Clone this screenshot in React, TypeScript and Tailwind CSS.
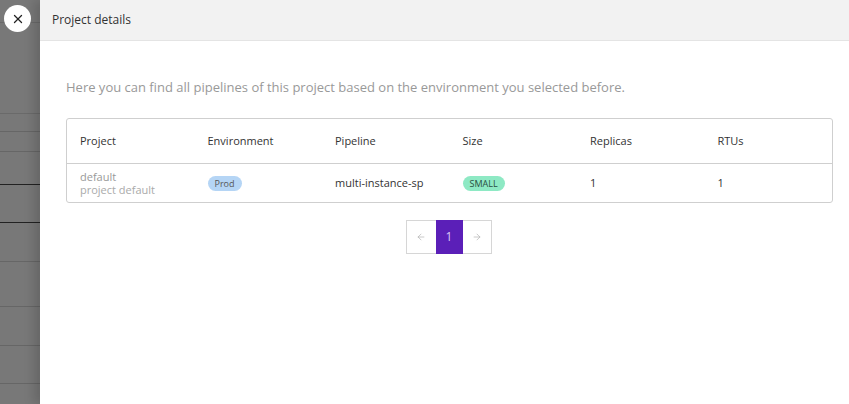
import { ArrowLeft, ArrowRight, X } from "lucide-react";

const backdropRows = [
  { h: "h-[23px]", line: "border-[#6a6a6a]" },
  { h: "h-[91px]", line: "border-[#6a6a6a]" },
  { h: "h-[18px]", line: "border-[#666]" },
  { h: "h-[20px]", line: "border-[#666]" },
  { h: "h-[33px]", line: "border-[#222]" },
  { h: "h-[38px]", line: "border-[#222]" },
  { h: "h-[39px]", line: "border-[#666]" },
  { h: "h-[45px]", line: "border-[#666]" },
  { h: "h-[39px]", line: "border-[#666]" },
  { h: "h-[38px]", line: "border-[#666]" },
];

const columns = ["Project", "Environment", "Pipeline", "Size", "Replicas", "RTUs"];

export default function App() {
  return (
    <div
      className="relative flex h-[404px] w-[849px] overflow-hidden bg-white text-[#333]"
      style={{ fontFamily: '"Open Sans", "Noto Sans", sans-serif' }}
    >
      {/* dimmed page behind the drawer */}
      <div className="flex w-[40px] shrink-0 flex-col bg-[#787878]">
        {backdropRows.map((row, i) => (
          <div key={i} className={`${row.h} shrink-0 border-b ${row.line}`} />
        ))}
      </div>

      <button className="absolute left-[4px] top-[5px] z-10 flex h-[27px] w-[27px] items-center justify-center rounded-full bg-white text-[#222]">
        <X size={14} strokeWidth={2.2} />
      </button>

      <div className="flex flex-1 flex-col shadow-[-6px_0_10px_rgba(0,0,0,0.15)]">
        <div className="flex h-[41px] shrink-0 items-center border-b border-[#e4e4e4] bg-[#f2f2f2] pl-[12px] text-[12px] text-[#333]">
          Project details
        </div>

        <div className="pl-[26px] pr-[16px]">
          <p className="mt-[37px] text-[13px] leading-[18px] text-[#999]">
            Here you can find all pipelines of this project based on the environment you selected before.
          </p>

          <div className="mt-[22px] rounded-[3px] border border-[#cfcfcf]">
            <div className="grid h-[45px] grid-cols-6 items-center border-b border-[#cfcfcf] text-[11px] text-[#333]">
              {columns.map((c) => (
                <div key={c} className="pl-[13px]">
                  {c}
                </div>
              ))}
            </div>
            <div className="grid h-[38px] grid-cols-6 items-center text-[11px] text-[#333]">
              <div className="pl-[13px] text-[#999]">
                <div className="leading-[13px]">default</div>
                <div className="leading-[13px] text-[#aaa]">project default</div>
              </div>
              <div className="pl-[13px]">
                <span className="inline-flex h-[15px] items-center rounded-full bg-[#b5d5f5] px-[7px] text-[9px] text-[#555]">
                  Prod
                </span>
              </div>
              <div className="pl-[13px]">multi-instance-sp</div>
              <div className="pl-[13px]">
                <span className="inline-flex h-[15px] items-center rounded-full bg-[#8ee9c4] px-[7px] text-[9px] text-[#2b4f42]">
                  SMALL
                </span>
              </div>
              <div className="pl-[13px]">1</div>
              <div className="pl-[13px]">1</div>
            </div>
          </div>

          <div className="mt-[17px] flex justify-center">
            <div className="-ml-[2px] flex h-[34px]">
              <button className="flex w-[30px] items-center justify-center border border-r-0 border-[#d6d6d6] text-[#aaa]">
                <ArrowLeft size={10} strokeWidth={1.5} />
              </button>
              <button className="flex w-[27px] items-center justify-center bg-[#5b1fb8] text-[12px] text-[#d9c8f5]">
                1
              </button>
              <button className="flex w-[29px] items-center justify-center border border-l-0 border-[#d6d6d6] text-[#aaa]">
                <ArrowRight size={10} strokeWidth={1.5} />
              </button>
            </div>
          </div>
        </div>
      </div>
    </div>
  );
}
